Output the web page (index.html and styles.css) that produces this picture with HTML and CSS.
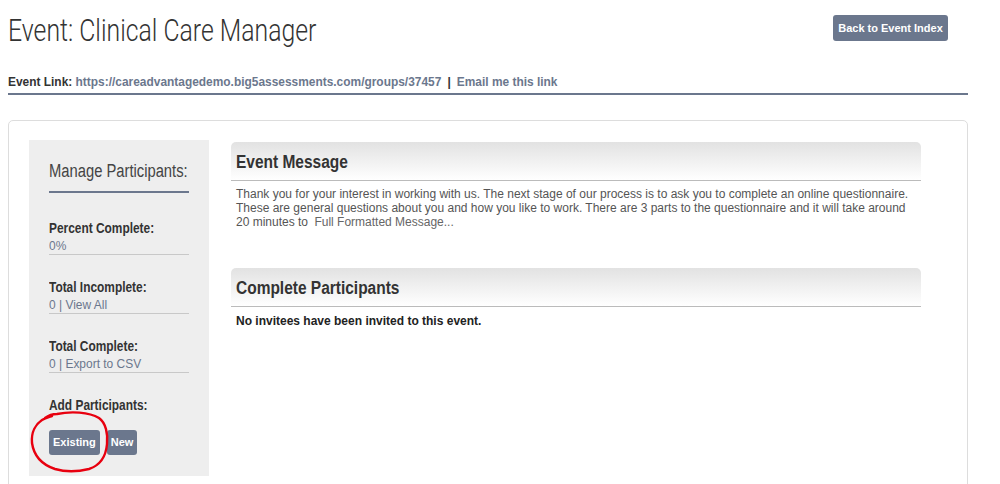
FILE: index.html
```html
<!DOCTYPE html>
<html>
<head>
<meta charset="utf-8">
<link rel="stylesheet" href="styles.css">
</head>
<body>
<div class="page">
  <header class="top">
    <h1 class="title"><span class="cond-title">Event: Clinical Care Manager</span></h1>
    <a class="btn btn-back">Back to Event Index</a>
  </header>
  <div class="eventlink">
    <span class="cond-link"><span class="label">Event Link:</span> <a class="link">https://careadvantagedemo.big5assessments.com/groups/37457</a> <span class="sep">|</span> <a class="link">Email me this link</a></span>
  </div>
  <div class="panel">
    <aside class="sidebar">
      <h2 class="side-title"><span class="cond-side">Manage Participants:</span></h2>
      <div class="stat">
        <div class="stat-head"><span class="cond-head">Percent Complete:</span></div>
        <div class="stat-val"><a class="vlink cond-val">0%</a></div>
      </div>
      <div class="stat">
        <div class="stat-head"><span class="cond-head">Total Incomplete:</span></div>
        <div class="stat-val"><a class="vlink cond-val">0 | View All</a></div>
      </div>
      <div class="stat">
        <div class="stat-head"><span class="cond-head">Total Complete:</span></div>
        <div class="stat-val"><a class="vlink cond-val">0 | Export to CSV</a></div>
      </div>
      <div class="stat-head"><span class="cond-head">Add Participants:</span></div>
      <div class="btns">
        <a class="btn btn-small">Existing</a>
        <a class="btn btn-small">New</a>
      </div>
      <svg class="scribble" width="84" height="66" viewBox="0 0 84 66">
        <path d="M16 8 C20 5 24 4 28 4 C42 1 60 2 70 8 C77 13 79 24 78 34 C77 46 72 55 60 59 C48 62 36 62 26 59 C14 55 5 47 3 33 C2 22 7 14 13 10 C16 8 20 7 23 6" fill="none" stroke="#e8000f" stroke-width="2.4" stroke-linecap="round"/>
      </svg>
    </aside>
    <main class="main">
      <section class="box">
        <h3 class="box-head"><span class="cond-box">Event Message</span></h3>
        <p class="msg">Thank you for your interest in working with us. The next stage of our process is to ask you to complete an online questionnaire. These are general questions about you and how you like to work. There are 3 parts to the questionnaire and it will take around 20 minutes to <a class="msglink">Full Formatted Message...</a></p>
      </section>
      <section class="box">
        <h3 class="box-head"><span class="cond-box">Complete Participants</span></h3>
        <p class="none">No invitees have been invited to this event.</p>
      </section>
    </main>
  </div>
</div>
</body>
</html>
```

FILE: styles.css
```css
* { box-sizing: border-box; }
body {
  margin: 0;
  background: #fff;
  font-family: "Liberation Sans", Arial, sans-serif;
  color: #333;
}
.page {
  padding: 0 32px 0 8px;
}
/* condensed text: Arial-metric face narrowed horizontally */
.cond-title, .cond-link, .cond-side, .cond-head, .cond-val, .cond-box {
  display: inline-block;
  white-space: nowrap;
  transform-origin: 0 50%;
}
.cond-title { transform: scaleX(0.8); }
.cond-link { transform: scaleX(0.917); }
.cond-side { transform: scaleX(0.82); }
.cond-head { transform: scaleX(0.85); }
.cond-val { transform: scaleX(0.92); }
.cond-box { transform: scaleX(0.86); }

.top {
  display: flex;
  justify-content: space-between;
  align-items: flex-start;
  padding: 15px 20px 0 0;
}
.title {
  margin: -1px 0 0;
  font-family: "Roboto", "Liberation Sans", sans-serif;
  font-weight: 300;
  font-size: 31px;
  line-height: 34px;
  color: #333;
}
.btn {
  display: inline-block;
  background: #6b778d;
  color: #fff;
  font-family: "Liberation Sans", Arial, sans-serif;
  font-weight: bold;
  font-size: 11px;
  border-radius: 3px;
  text-align: center;
}
.btn-back {
  width: 115px;
  height: 26px;
  line-height: 26px;
}
.eventlink {
  margin-top: 26px;
  padding-bottom: 3px;
  border-bottom: 2px solid #6b778d;
  font-weight: bold;
  font-size: 13px;
  line-height: 16px;
}
.eventlink .label { color: #333; }
.eventlink .link { color: #6b778d; }
.eventlink .sep { color: #333; margin: 0 3px; }
.panel {
  margin-top: 25px;
  border: 1px solid #ddd;
  border-radius: 5px;
  padding: 19px 46px 20px 20px;
  display: flex;
  gap: 22px;
}
.sidebar {
  position: relative;
  width: 180px;
  flex: none;
  background: #eee;
  padding: 20px 20px 21px 20px;
}
.side-title {
  margin: 0 0 26px;
  padding-bottom: 9px;
  border-bottom: 2px solid #6b778d;
  font-weight: normal;
  font-size: 18px;
  line-height: 22px;
  color: #444;
}
.stat { margin-bottom: 23px; }
.stat-head {
  font-weight: bold;
  font-size: 14px;
  line-height: 18px;
  color: #333;
}
.stat-val {
  font-size: 13px;
  line-height: 17px;
  border-bottom: 1px solid #c8c8c8;
}
.vlink { color: #6b778d; }
.btns {
  display: flex;
  gap: 7px;
  margin-top: 16px;
}
.btn-small {
  height: 25px;
  line-height: 25px;
  padding: 0 4px;
}
.scribble {
  position: absolute;
  left: 0;
  top: 270px;
}
.main {
  flex: 1;
  padding-top: 2px;
}
.box { margin-bottom: 39px; }
.box-head {
  margin: 0;
  height: 39px;
  padding: 10px 0 0 5px;
  border-radius: 5px 5px 0 0;
  background: linear-gradient(#e2e2e2, #fff);
  border-bottom: 1px solid #bbb;
  font-weight: bold;
  font-size: 18px;
  line-height: 20px;
  color: #333;
}
.msg {
  margin: 6px 0 0;
  padding-left: 5px;
  font-size: 12px;
  line-height: 14px;
  color: #555;
}
.msglink { color: #666; margin-left: 3px; }
.none {
  margin: 7px 0 0;
  padding-left: 5px;
  font-size: 12px;
  font-weight: bold;
  line-height: 14px;
  color: #222;
}
```
